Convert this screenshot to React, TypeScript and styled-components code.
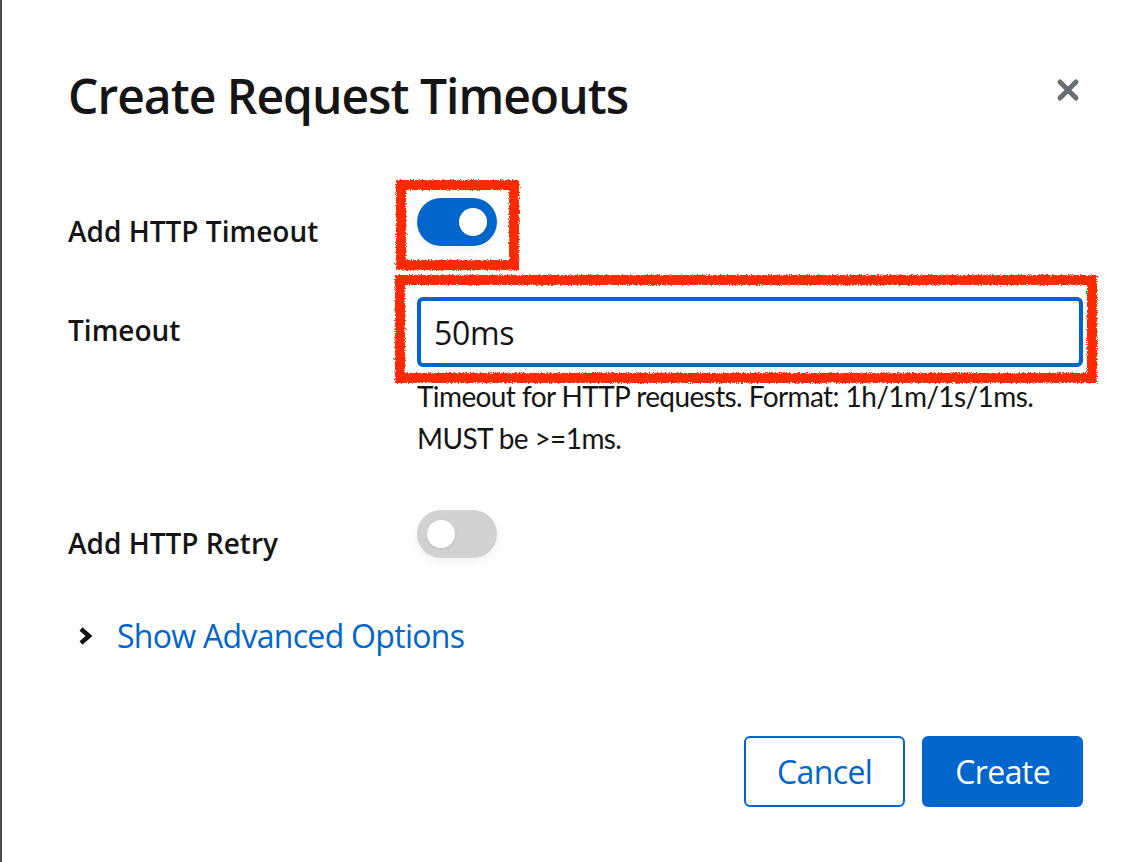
import styled, { createGlobalStyle } from "styled-components";
import { useState } from "react";

const GlobalStyle = createGlobalStyle`
  html, body {
    margin: 0;
    padding: 0;
    background: #ffffff;
  }
  body {
    font-family: "Open Sans", "Liberation Sans", sans-serif;
    color: #151515;
  }
`;

const Page = styled.div`
  box-sizing: border-box;
  width: 1142px;
  min-height: 862px;
  border-left: 2px solid #4a4a4a;
  padding: 65px 59px 0 66px;
`;

const Header = styled.header`
  display: flex;
  justify-content: space-between;
  align-items: flex-start;
`;

const Title = styled.h1`
  margin: 0;
  font-size: 48px;
  line-height: 62px;
  font-weight: 600;
  letter-spacing: -1px;
`;

const CloseButton = styled.button`
  border: none;
  background: none;
  padding: 0;
  margin: 13px 3px 0 0;
  width: 24px;
  height: 24px;
  display: flex;
  cursor: pointer;
`;

const Form = styled.form`
  display: flex;
  flex-direction: column;
  margin-top: 71px;
`;

const Row = styled.div<{ $top?: number }>`
  display: grid;
  grid-template-columns: 349px 1fr;
  align-items: start;
  margin-top: ${(p) => p.$top ?? 0}px;
`;

const Label = styled.label`
  padding-top: 12px;
  font-size: 28px;
  line-height: 42px;
  font-weight: 600;
  letter-spacing: 0;
`;

const Control = styled.div`
  display: flex;
  flex-direction: column;
  align-items: flex-start;
`;

const Marked = styled.div<{ $fill?: boolean }>`
  position: relative;
  display: flex;
  width: ${(p) => (p.$fill ? "100%" : "auto")};
`;

const Scribble = styled.span<{ $t: number; $r: number; $b: number; $l: number }>`
  position: absolute;
  top: -${(p) => p.$t}px;
  right: -${(p) => p.$r}px;
  bottom: -${(p) => p.$b}px;
  left: -${(p) => p.$l}px;
  border: 10px solid #ff2a00;
  pointer-events: none;
  filter: url(#rough);
`;

const Track = styled.button<{ $on: boolean }>`
  position: relative;
  width: 80px;
  height: 48px;
  border: none;
  padding: 0;
  border-radius: 24px;
  background: ${(p) => (p.$on ? "#0066cc" : "#d2d2d2")};
  box-shadow: 0 4px 10px rgba(0, 0, 0, 0.06);
  cursor: pointer;
`;

const Knob = styled.span<{ $on: boolean }>`
  position: absolute;
  top: 10px;
  left: ${(p) => (p.$on ? 42 : 10)}px;
  width: 28px;
  height: 28px;
  border-radius: 50%;
  background: #ffffff;
  box-shadow: 0 1px 3px rgba(0, 0, 0, 0.12);
`;

const Input = styled.input`
  box-sizing: border-box;
  width: 100%;
  height: 70px;
  border: 4px solid #0066cc;
  border-radius: 6px;
  padding: 0 13px;
  font-family: inherit;
  font-size: 32px;
  letter-spacing: -0.3px;
  color: #151515;
  outline: none;
`;

const Helper = styled.div`
  margin-top: 8px;
  font-family: Lato, "Open Sans", sans-serif;
  font-size: 28px;
  line-height: 42px;
  letter-spacing: -0.6px;
  color: #151515;
`;

const Expand = styled.button`
  display: flex;
  align-items: center;
  gap: 24px;
  margin-top: 48px;
  margin-left: 9px;
  border: none;
  background: none;
  padding: 0;
  font-family: inherit;
  font-size: 32px;
  line-height: 48px;
  letter-spacing: -0.7px;
  color: #0066cc;
  cursor: pointer;
`;

const Footer = styled.footer`
  display: flex;
  justify-content: flex-end;
  gap: 17px;
  margin-top: 76px;
`;

const Button = styled.button<{ $primary?: boolean }>`
  box-sizing: border-box;
  height: 71px;
  padding: 0 31px;
  border-radius: 6px;
  border: 2px solid #0066cc;
  background: ${(p) => (p.$primary ? "#0066cc" : "#ffffff")};
  color: ${(p) => (p.$primary ? "#ffffff" : "#0066cc")};
  font-family: inherit;
  font-size: 32px;
  letter-spacing: -0.6px;
  cursor: pointer;
`;

function Switch({ on, onChange }: { on: boolean; onChange: () => void }) {
  return (
    <Track type="button" $on={on} onClick={onChange} aria-pressed={on}>
      <Knob $on={on} />
    </Track>
  );
}

export default function App() {
  const [timeout, setTimeoutOn] = useState(true);
  const [retry, setRetry] = useState(false);
  const [value, setValue] = useState("50ms");

  return (
    <>
      <GlobalStyle />
      <svg width="0" height="0" style={{ position: "absolute" }}>
        <filter id="rough">
          <feTurbulence type="fractalNoise" baseFrequency="0.9" numOctaves="2" seed="3" />
          <feDisplacementMap in="SourceGraphic" scale="5" />
        </filter>
      </svg>
      <Page>
        <Header>
          <Title>Create Request Timeouts</Title>
          <CloseButton aria-label="Close">
            <svg width="24" height="24" viewBox="0 0 24 24">
              <path d="M4 4 L20 20 M20 4 L4 20" stroke="#6a6e73" strokeWidth="5" strokeLinecap="round" />
            </svg>
          </CloseButton>
        </Header>

        <Form onSubmit={(e) => e.preventDefault()}>
          <Row>
            <Label>Add HTTP Timeout</Label>
            <Control>
              <Marked>
                <Switch on={timeout} onChange={() => setTimeoutOn(!timeout)} />
                <Scribble $t={18} $r={22} $b={24} $l={21} />
              </Marked>
            </Control>
          </Row>

          <Row $top={45}>
            <Label>Timeout</Label>
            <Control>
              <Marked $fill>
                <Input value={value} onChange={(e) => setValue(e.target.value)} />
                <Scribble $t={22} $r={14} $b={16} $l={22} />
              </Marked>
              <Helper>
                Timeout for HTTP requests. Format: 1h/1m/1s/1ms.
                <br />
                MUST be &gt;=1ms.
              </Helper>
            </Control>
          </Row>

          <Row $top={51}>
            <Label>Add HTTP Retry</Label>
            <Control>
              <Switch on={retry} onChange={() => setRetry(!retry)} />
            </Control>
          </Row>

          <Expand type="button">
            <svg width="16" height="20" viewBox="0 0 16 20">
              <path d="M4 3 L12 10 L4 17" fill="none" stroke="#151515" strokeWidth="4.5" />
            </svg>
            Show Advanced Options
          </Expand>

          <Footer>
            <Button type="button">Cancel</Button>
            <Button type="submit" $primary>
              Create
            </Button>
          </Footer>
        </Form>
      </Page>
    </>
  );
}
